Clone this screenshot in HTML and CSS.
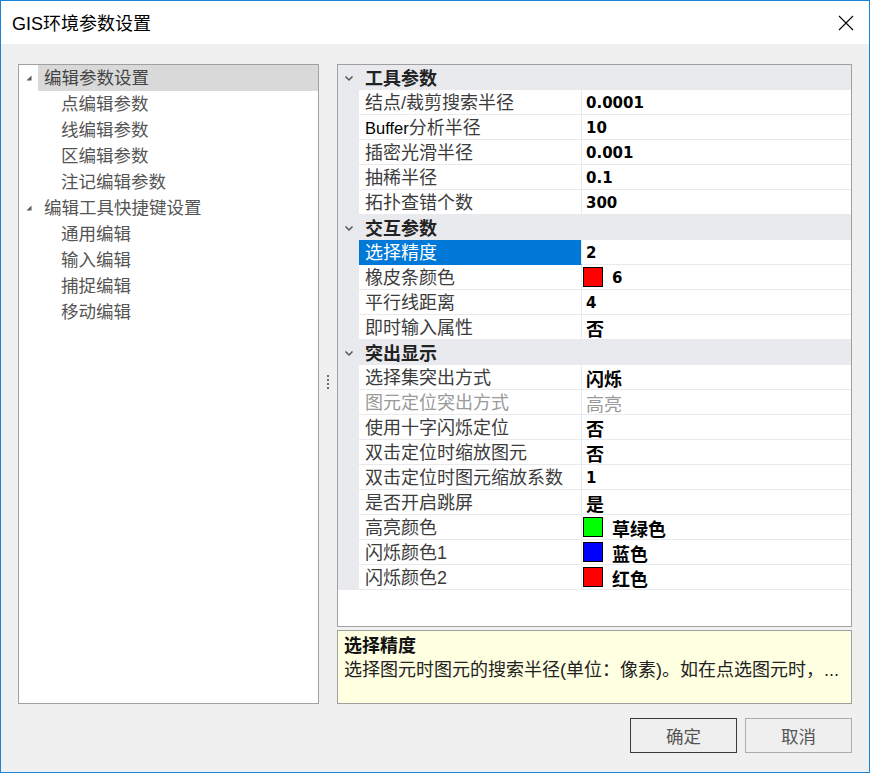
FILE: index.html
```html
<!DOCTYPE html>
<html lang="zh-CN">
<head>
<meta charset="utf-8">
<title>GIS环境参数设置</title>
<link rel="stylesheet" href="styles.css">
</head>
<body>
<div class="window">
  <div class="titlebar">
    <span class="title">GIS环境参数设置</span>
    <svg class="close" width="16" height="16" viewBox="0 0 16 16"><path d="M1 1 L15 15 M15 1 L1 15" stroke="#000" stroke-width="1.1" fill="none"/></svg>
  </div>
  <div class="client">
    <div class="main">
      <div class="tree">
        <div class="node">
          <span class="exp"><svg width="8" height="8" viewBox="0 0 8 8"><polygon points="6.5,1.5 6.5,6.5 1.5,6.5" fill="#5a5a5a"/></svg></span>
          <span class="label sel">编辑参数设置</span>
        </div>
        <div class="node child"><span class="label">点编辑参数</span></div>
        <div class="node child"><span class="label">线编辑参数</span></div>
        <div class="node child"><span class="label">区编辑参数</span></div>
        <div class="node child"><span class="label">注记编辑参数</span></div>
        <div class="node">
          <span class="exp"><svg width="8" height="8" viewBox="0 0 8 8"><polygon points="6.5,1.5 6.5,6.5 1.5,6.5" fill="#5a5a5a"/></svg></span>
          <span class="label">编辑工具快捷键设置</span>
        </div>
        <div class="node child"><span class="label">通用编辑</span></div>
        <div class="node child"><span class="label">输入编辑</span></div>
        <div class="node child"><span class="label">捕捉编辑</span></div>
        <div class="node child"><span class="label">移动编辑</span></div>
      </div>
      <div class="splitter"><span class="grip"><i></i><i></i><i></i><i></i></span></div>
      <div class="right">
        <div class="grid">
          <div class="cat"><span class="chev"><svg width="10" height="7" viewBox="0 0 10 7"><polyline points="1.5,1.5 5,5 8.5,1.5" fill="none" stroke="#555" stroke-width="1.5"/></svg></span><span class="cat-label">工具参数</span></div>
          <div class="row"><div class="gut"></div><div class="name">结点/裁剪搜索半径</div><div class="val"><span class="num">0.0001</span></div></div>
          <div class="row"><div class="gut"></div><div class="name"><span class="lat">Buffer</span>分析半径</div><div class="val"><span class="num">10</span></div></div>
          <div class="row"><div class="gut"></div><div class="name">插密光滑半径</div><div class="val"><span class="num">0.001</span></div></div>
          <div class="row"><div class="gut"></div><div class="name">抽稀半径</div><div class="val"><span class="num">0.1</span></div></div>
          <div class="row"><div class="gut"></div><div class="name">拓扑查错个数</div><div class="val"><span class="num">300</span></div></div>

          <div class="cat"><span class="chev"><svg width="10" height="7" viewBox="0 0 10 7"><polyline points="1.5,1.5 5,5 8.5,1.5" fill="none" stroke="#555" stroke-width="1.5"/></svg></span><span class="cat-label">交互参数</span></div>
          <div class="row"><div class="gut"></div><div class="name selected">选择精度</div><div class="val"><span class="num">2</span></div></div>
          <div class="row"><div class="gut"></div><div class="name">橡皮条颜色</div><div class="val sw"><span class="swatch red"></span><span class="num">6</span></div></div>
          <div class="row"><div class="gut"></div><div class="name">平行线距离</div><div class="val"><span class="num">4</span></div></div>
          <div class="row"><div class="gut"></div><div class="name">即时输入属性</div><div class="val"><span class="cjk">否</span></div></div>

          <div class="cat"><span class="chev"><svg width="10" height="7" viewBox="0 0 10 7"><polyline points="1.5,1.5 5,5 8.5,1.5" fill="none" stroke="#555" stroke-width="1.5"/></svg></span><span class="cat-label">突出显示</span></div>
          <div class="row"><div class="gut"></div><div class="name">选择集突出方式</div><div class="val"><span class="cjk">闪烁</span></div></div>
          <div class="row"><div class="gut"></div><div class="name disabled">图元定位突出方式</div><div class="val"><span class="cjk dis">高亮</span></div></div>
          <div class="row"><div class="gut"></div><div class="name">使用十字闪烁定位</div><div class="val"><span class="cjk">否</span></div></div>
          <div class="row"><div class="gut"></div><div class="name">双击定位时缩放图元</div><div class="val"><span class="cjk">否</span></div></div>
          <div class="row"><div class="gut"></div><div class="name">双击定位时图元缩放系数</div><div class="val"><span class="num">1</span></div></div>
          <div class="row"><div class="gut"></div><div class="name">是否开启跳屏</div><div class="val"><span class="cjk">是</span></div></div>
          <div class="row"><div class="gut"></div><div class="name">高亮颜色</div><div class="val sw"><span class="swatch green"></span><span class="cjk">草绿色</span></div></div>
          <div class="row"><div class="gut"></div><div class="name">闪烁颜色1</div><div class="val sw"><span class="swatch blue"></span><span class="cjk">蓝色</span></div></div>
          <div class="row"><div class="gut"></div><div class="name">闪烁颜色2</div><div class="val sw"><span class="swatch red"></span><span class="cjk">红色</span></div></div>
        </div>
        <div class="desc">
          <div class="desc-title">选择精度</div>
          <div class="desc-text">选择图元时图元的搜索半径(单位：像素)。如在点选图元时，...</div>
        </div>
      </div>
    </div>
    <div class="buttons">
      <div class="btn def">确定</div>
      <div class="btn">取消</div>
    </div>
  </div>
</div>
</body>
</html>
```

FILE: styles.css
```css
body {
  margin: 0;
  background: #fff;
  font-family: "Liberation Sans", "Noto Sans CJK SC", sans-serif;
}

.window {
  width: 870px;
  height: 773px;
  box-sizing: border-box;
  border: 1px solid #1883d7;
  display: flex;
  flex-direction: column;
}

.titlebar {
  height: 43px;
  background: #fff;
  display: flex;
  align-items: center;
  justify-content: space-between;
  padding: 0 15px 0 11px;
}

.title {
  font-size: 18px;
  line-height: 24px;
  color: #000;
  margin-top: 2px;
}

.close {
  display: block;
  margin-top: 1px;
}

.client {
  flex: 1;
  background: #f0f0f0;
  padding: 20px 17px 0 17px;
  display: flex;
  flex-direction: column;
}

.main {
  height: 640px;
  display: flex;
}

/* tree */
.tree {
  width: 301px;
  box-sizing: border-box;
  border: 1px solid #a0a0a0;
  background: #fff;
}

.node {
  height: 26px;
  display: flex;
  align-items: stretch;
}

.exp {
  width: 18px;
  display: flex;
  align-items: center;
  justify-content: center;
  padding-left: 1px;
}

.label {
  flex: 1;
  padding-left: 6px;
  font-size: 17.5px;
  line-height: 26px;
  color: #555;
}

.label.sel {
  background: #d9d9d9;
  color: #444;
}

.node.child .label {
  padding-left: 42px;
}

/* splitter */
.splitter {
  width: 18px;
  display: flex;
  align-items: center;
  justify-content: center;
}

.grip {
  display: flex;
  flex-direction: column;
  gap: 2px;
  margin-top: -4px;
}

.grip i {
  display: block;
  width: 2px;
  height: 2px;
  background: #6e6e6e;
}

/* right side */
.right {
  flex: 1;
  display: flex;
  flex-direction: column;
  gap: 3px;
}

.grid {
  height: 563px;
  box-sizing: border-box;
  border: 1px solid #a0a0a0;
  background: #fff;
}

.cat {
  height: 25px;
  background: #e9eaee;
  display: flex;
  align-items: center;
}

.chev {
  width: 21px;
  display: flex;
  justify-content: center;
  padding-top: 1px;
}

.cat-label {
  padding-left: 6px;
  padding-top: 3px;
  font-size: 18px;
  font-weight: bold;
  line-height: 22px;
  color: #222;
}

.row {
  height: 25px;
  display: flex;
}

.gut {
  width: 21px;
  background: #e9eaee;
}

.name {
  width: 223px;
  box-sizing: border-box;
  border-right: 1px solid #e9eaee;
  border-bottom: 1px solid #e9eaee;
  padding-left: 6px;
  padding-top: 2px;
  font-size: 18px;
  line-height: 22px;
  color: #3c3c3c;
  white-space: nowrap;
}

.name .lat {
  font-size: 16.5px;
  color: #000;
}

.name.selected {
  background: #0078d7;
  color: #fff;
  border-bottom-color: #0078d7;
}

.name.disabled {
  color: #9a9a9a;
}

.val {
  flex: 1;
  border-bottom: 1px solid #e9eaee;
  padding-left: 4px;
  padding-top: 2px;
  box-sizing: border-box;
  display: flex;
  align-items: center;
  white-space: nowrap;
}

.val.sw {
  padding-left: 1px;
  padding-top: 0;
}

.val.sw .num,
.val.sw .cjk {
  padding-top: 2px;
}

.num {
  font-family: "DejaVu Sans", sans-serif;
  font-weight: bold;
  font-size: 15px;
  color: #000;
  line-height: 22px;
}

.cjk {
  font-family: "Noto Sans CJK SC", sans-serif;
  font-weight: bold;
  font-size: 18px;
  line-height: 22px;
  color: #000;
}

.cjk.dis {
  font-weight: normal;
  color: #9a9a9a;
}

.swatch {
  width: 18px;
  height: 18px;
  border: 1px solid #000;
  margin-right: 9px;
}

.swatch.red { background: #ff0000; }
.swatch.green { background: #00ff00; }
.swatch.blue { background: #0000ff; }

.desc {
  flex: 1;
  box-sizing: border-box;
  border: 1px solid #a0a0a0;
  background: #ffffe1;
  padding: 4px 6px;
}

.desc-title {
  font-size: 18px;
  font-weight: bold;
  line-height: 22px;
  color: #111;
}

.desc-text {
  font-size: 18px;
  line-height: 26px;
  color: #222;
  white-space: nowrap;
}

.buttons {
  display: flex;
  justify-content: flex-end;
  gap: 8px;
  margin-top: 14px;
}

.btn {
  width: 107px;
  height: 35px;
  box-sizing: border-box;
  border: 1px solid #adadad;
  background: #efefef;
  display: flex;
  align-items: center;
  justify-content: center;
  font-size: 17.5px;
  color: #555;
}

.btn.def {
  border-color: #3a3a3a;
}
```
